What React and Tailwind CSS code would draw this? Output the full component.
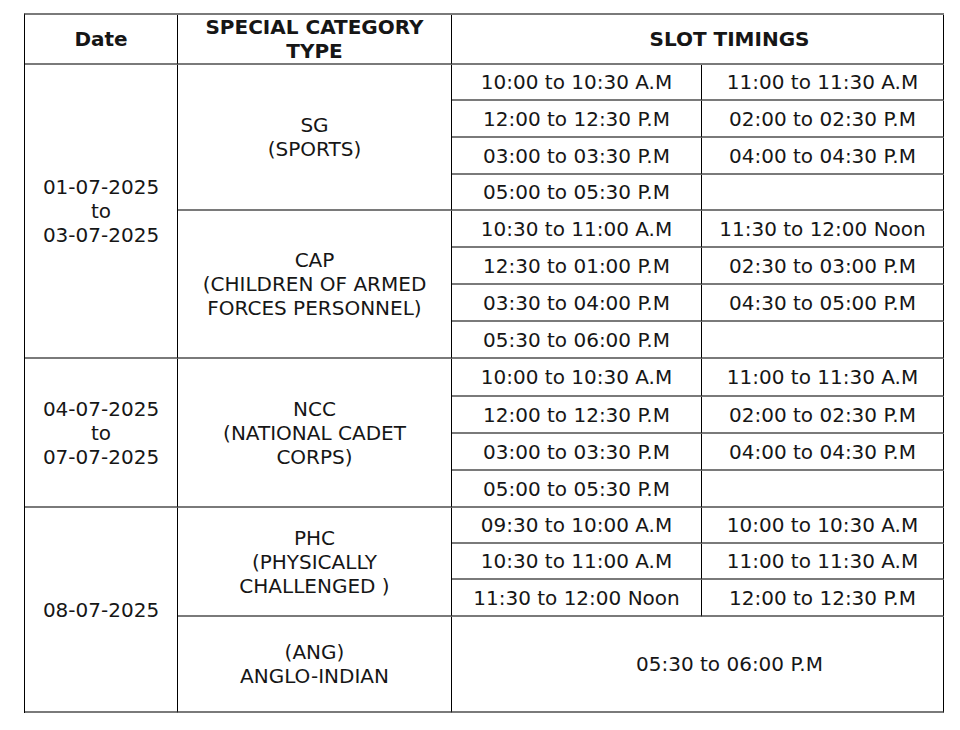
import React from "react";

const cellBase = "flex items-center justify-center text-center border-r border-r-black border-b-2 border-b-[#7a7a7a]";

function Cell({ className = "", children }) {
  return <div className={`${cellBase} ${className}`}>{children}</div>;
}

const groups = [
  {
    date: ["01-07-2025", "to", "03-07-2025"],
    dateSpan: "row-span-8",
    cats: [
      {
        label: ["SG", "(SPORTS)"],
        span: "row-span-4",
        slots: [
          ["10:00 to 10:30 A.M", "11:00 to 11:30 A.M"],
          ["12:00 to 12:30 P.M", "02:00 to 02:30 P.M"],
          ["03:00 to 03:30 P.M", "04:00 to 04:30 P.M"],
          ["05:00 to 05:30 P.M", ""],
        ],
      },
      {
        label: ["CAP", "(CHILDREN OF ARMED", "FORCES PERSONNEL)"],
        span: "row-span-4",
        slots: [
          ["10:30 to 11:00 A.M", "11:30 to 12:00 Noon"],
          ["12:30 to 01:00 P.M", "02:30 to 03:00 P.M"],
          ["03:30 to 04:00 P.M", "04:30 to 05:00 P.M"],
          ["05:30 to 06:00 P.M", ""],
        ],
      },
    ],
  },
  {
    date: ["04-07-2025", "to", "07-07-2025"],
    dateSpan: "row-span-4",
    cats: [
      {
        label: ["NCC", "(NATIONAL CADET", "CORPS)"],
        span: "row-span-4",
        slots: [
          ["10:00 to 10:30 A.M", "11:00 to 11:30 A.M"],
          ["12:00 to 12:30 P.M", "02:00 to 02:30 P.M"],
          ["03:00 to 03:30 P.M", "04:00 to 04:30 P.M"],
          ["05:00 to 05:30 P.M", ""],
        ],
      },
    ],
  },
];

export default function App() {
  return (
    <div className="bg-white min-h-[730px] w-[960px] pt-[13px] pl-[24px] font-['DejaVu_Sans',_Verdana,_sans-serif] text-[20px] leading-[24px] text-[#161616]">
      <div className="grid w-[920px] grid-cols-[153px_274px_250px_242px] grid-rows-[50px_36px_37px_37px_36px_37px_37px_37px_37px_38px_37px_37px_37px_36px_36px_37px_96px] border-l border-l-black border-t-2 border-t-[#7a7a7a]">
        <Cell className="font-bold">Date</Cell>
        <Cell className="font-bold">
          <div>
            SPECIAL CATEGORY
            <br />
            TYPE
          </div>
        </Cell>
        <Cell className="col-span-2 font-bold pl-[64px]">SLOT TIMINGS</Cell>

        {groups.map((g, gi) => (
          <React.Fragment key={gi}>
            {g.cats.map((c, ci) => (
              <React.Fragment key={ci}>
                {c.slots.map((s, si) => (
                  <React.Fragment key={si}>
                    {ci === 0 && si === 0 && (
                      <Cell className={g.dateSpan}>
                        <div>
                          {g.date.map((t, i) => (
                            <div key={i}>{t}</div>
                          ))}
                        </div>
                      </Cell>
                    )}
                    {si === 0 && (
                      <Cell className={c.span}>
                        <div>
                          {c.label.map((t, i) => (
                            <div key={i}>{t}</div>
                          ))}
                        </div>
                      </Cell>
                    )}
                    <Cell>{s[0]}</Cell>
                    <Cell>{s[1]}</Cell>
                  </React.Fragment>
                ))}
              </React.Fragment>
            ))}
          </React.Fragment>
        ))}

        {/* 08-07-2025 group */}
        <Cell className="row-span-4">08-07-2025</Cell>
        <Cell className="row-span-3">
          <div>
            <div>PHC</div>
            <div>(PHYSICALLY</div>
            <div>CHALLENGED )</div>
          </div>
        </Cell>
        <Cell>09:30 to 10:00 A.M</Cell>
        <Cell>10:00 to 10:30 A.M</Cell>
        <Cell>10:30 to 11:00 A.M</Cell>
        <Cell>11:00 to 11:30 A.M</Cell>
        <Cell>11:30 to 12:00 Noon</Cell>
        <Cell>12:00 to 12:30 P.M</Cell>
        <Cell>
          <div>
            <div>(ANG)</div>
            <div>ANGLO-INDIAN</div>
          </div>
        </Cell>
        <Cell className="col-span-2 pl-[64px]">05:30 to 06:00 P.M</Cell>
      </div>
    </div>
  );
}
